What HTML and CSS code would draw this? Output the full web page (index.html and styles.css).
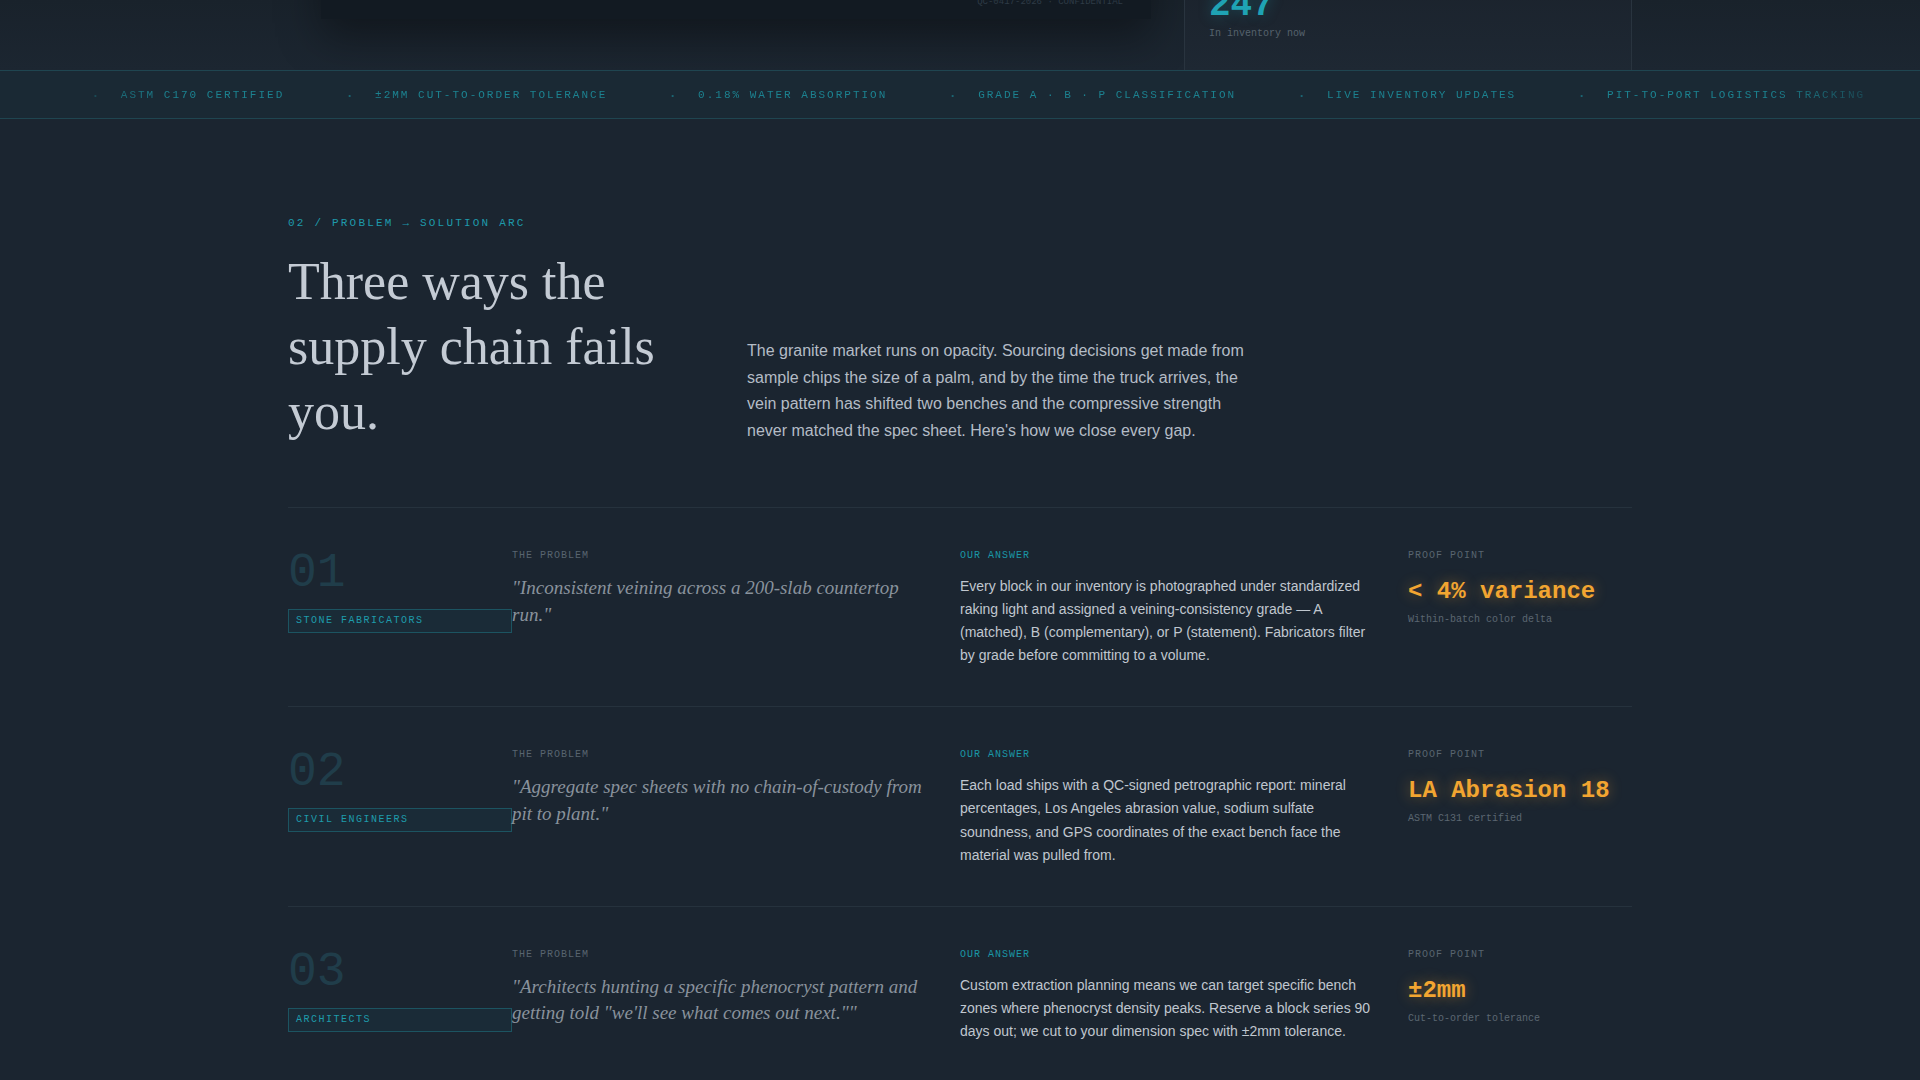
FILE: index.html
```html
<!DOCTYPE html>
<html>
<head>
    <title>Granite Supply — Problem / Solution</title>
    <link rel="stylesheet" href="styles.css">
</head>
<body>
    <header class="hero">
        <div class="hero-inner">
            <div class="hero-visual">
                <div class="slab-frame">
                    <span class="slab-caption">QC-0417-2026 · CONFIDENTIAL</span>
                </div>
            </div>
            <div class="stat-card">
                <div class="stat-num">247</div>
                <div class="stat-label">In inventory now</div>
            </div>
        </div>
    </header>

    <!-- ticker strip -->
    <div class="ticker">
        <div class="ticker-track">
            <span class="tick"><i>•</i>ASTM C170 CERTIFIED</span>
            <span class="tick"><i>•</i>±2MM CUT-TO-ORDER TOLERANCE</span>
            <span class="tick"><i>•</i>0.18% WATER ABSORPTION</span>
            <span class="tick"><i>•</i>GRADE A · B · P CLASSIFICATION</span>
            <span class="tick"><i>•</i>LIVE INVENTORY UPDATES</span>
            <span class="tick"><i>•</i>PIT-TO-PORT LOGISTICS TRACKING</span>
            <span class="tick"><i>•</i>ASTM C170 CERTIFIED</span>
        </div>
    </div>

    <section class="arc">
        <div class="arc-head">
            <div>
                <p class="eyebrow">02 / PROBLEM → SOLUTION ARC</p>
                <h2>Three ways the supply chain fails you.</h2>
            </div>
            <p class="intro">The granite market runs on opacity. Sourcing decisions get made from sample chips the size of a palm, and by the time the truck arrives, the vein pattern has shifted two benches and the compressive strength never matched the spec sheet. Here's how we close every gap.</p>
        </div>

        <div class="rows">
            <!-- 01 -->
            <article class="row">
                <div class="who">
                    <div class="idx">01</div>
                    <span class="tag">STONE FABRICATORS</span>
                </div>
                <div class="cell">
                    <div class="cap">THE PROBLEM</div>
                    <p class="quote">"Inconsistent veining across a 200-slab countertop run."</p>
                </div>
                <div class="cell">
                    <div class="cap cap-teal">OUR ANSWER</div>
                    <p class="answer">Every block in our inventory is photographed under standardized raking light and assigned a veining-consistency grade — A (matched), B (complementary), or P (statement). Fabricators filter by grade before committing to a volume.</p>
                </div>
                <div class="proof">
                    <div class="cap">PROOF POINT</div>
                    <div class="proof-val">&lt; 4% variance</div>
                    <div class="proof-sub">Within-batch color delta</div>
                </div>
            </article>

            <!-- 02 -->
            <article class="row">
                <div class="who">
                    <div class="idx">02</div>
                    <span class="tag">CIVIL ENGINEERS</span>
                </div>
                <div class="cell">
                    <div class="cap">THE PROBLEM</div>
                    <p class="quote">"Aggregate spec sheets with no chain-of-custody from pit to plant."</p>
                </div>
                <div class="cell">
                    <div class="cap cap-teal">OUR ANSWER</div>
                    <p class="answer">Each load ships with a QC-signed petrographic report: mineral percentages, Los Angeles abrasion value, sodium sulfate soundness, and GPS coordinates of the exact bench face the material was pulled from.</p>
                </div>
                <div class="proof">
                    <div class="cap">PROOF POINT</div>
                    <div class="proof-val">LA Abrasion 18</div>
                    <div class="proof-sub">ASTM C131 certified</div>
                </div>
            </article>

            <!-- 03 -->
            <article class="row">
                <div class="who">
                    <div class="idx">03</div>
                    <span class="tag">ARCHITECTS</span>
                </div>
                <div class="cell">
                    <div class="cap">THE PROBLEM</div>
                    <p class="quote">"Architects hunting a specific phenocryst pattern and getting told "we'll see what comes out next.""</p>
                </div>
                <div class="cell">
                    <div class="cap cap-teal">OUR ANSWER</div>
                    <p class="answer">Custom extraction planning means we can target specific bench zones where phenocryst density peaks. Reserve a block series 90 days out; we cut to your dimension spec with ±2mm tolerance.</p>
                </div>
                <div class="proof">
                    <div class="cap">PROOF POINT</div>
                    <div class="proof-val">±2mm</div>
                    <div class="proof-sub">Cut-to-order tolerance</div>
                </div>
            </article>
        </div>
    </section>
</body>
</html>
```

FILE: styles.css
```css
body {
    margin: 0;
    background: #1b2530;
    font-family: "Liberation Sans", Arial, sans-serif;
    color: #c1c8d0;
}

/* hero (scrolled mostly out of view) */
.hero {
    height: 70px;
    overflow: hidden;
    display: flex;
    align-items: flex-end;
    background: linear-gradient(180deg, #19222b, #1c2631);
}
.hero-inner {
    width: 1344px;
    margin: 0 auto;
    display: grid;
    grid-template-columns: 1fr 448px;
    gap: 33px;
    align-items: end;
}
.hero-visual {
    padding: 0 0 51px 33px;
}
.slab-frame {
    height: 420px;
    background: #121a22;
    box-shadow: 0 18px 40px rgba(0,0,0,0.35);
    display: flex;
    align-items: flex-end;
    justify-content: flex-end;
    padding: 0 28px 12px;
}
.slab-caption {
    font-family: "Liberation Mono", monospace;
    font-size: 9px;
    color: #2e3b46;
}
.stat-card {
    border: 1px solid #29343f;
    border-bottom: none;
    background: linear-gradient(180deg, #1b232d, #1e2833);
    padding: 0 24px 29px;
}
.stat-num {
    font-family: "Liberation Mono", monospace;
    font-size: 36px;
    font-weight: bold;
    line-height: 1;
    color: #1fa3b4;
    text-shadow: 0 0 14px rgba(31,163,180,0.35);
    margin-bottom: 2px;
}
.stat-label {
    font-family: "Liberation Mono", monospace;
    font-size: 10px;
    line-height: 15px;
    color: #56626d;
}

/* ticker */
.ticker {
    border-top: 1px solid #1f4550;
    border-bottom: 1px solid #1f4550;
    background: #1a2934;
    padding: 17px 0 15px;
    overflow: hidden;
}
.ticker-track {
    display: flex;
    gap: 63px;
    white-space: nowrap;
    padding-left: 93px;
    font-family: "Liberation Mono", monospace;
    font-size: 11px;
    line-height: 15px;
    letter-spacing: 2px;
    color: #1c8290;
    -webkit-mask-image: linear-gradient(90deg, transparent, #000 9%, #000 92%, transparent);
    mask-image: linear-gradient(90deg, transparent, #000 9%, #000 92%, transparent);
}
.tick {
    display: flex;
    align-items: center;
    gap: 23px;
}
.tick i {
    font-style: normal;
    font-size: 8px;
    letter-spacing: 0;
    opacity: 0.7;
}

/* problem / solution arc */
.arc {
    width: 1344px;
    margin: 0 auto;
    padding-top: 97px;
}
.arc-head {
    display: grid;
    grid-template-columns: 411px 1fr;
    gap: 48px;
    align-items: end;
    margin-bottom: 63px;
}
.eyebrow {
    margin: 0 0 18px;
    font-family: "Liberation Mono", monospace;
    font-size: 11px;
    line-height: 15px;
    letter-spacing: 2.2px;
    color: #1e9aab;
}
h2 {
    margin: 0;
    font-family: "Liberation Serif", "Times New Roman", serif;
    font-weight: normal;
    font-size: 52px;
    line-height: 65px;
    color: #c4cbd4;
}
.intro {
    margin: 0;
    max-width: 512px;
    font-size: 16px;
    line-height: 1.65;
    color: #b4bcc6;
}

.row {
    display: grid;
    grid-template-columns: 1fr 2fr 2fr 1fr;
    border-top: 1px solid #26323d;
    padding: 41px 0 39px;
}
.who {
    display: flex;
    flex-direction: column;
    align-items: stretch;
}
.idx {
    font-family: "Liberation Mono", monospace;
    font-size: 48px;
    line-height: 1;
    color: #203d4a;
    margin-bottom: 12px;
}
.tag {
    display: block;
    border: 1px solid #1c5461;
    background: rgba(28,120,140,0.08);
    padding: 4px 7px;
    font-family: "Liberation Mono", monospace;
    font-size: 10px;
    line-height: 14px;
    letter-spacing: 1.5px;
    color: #1e9cac;
}
.cell {
    padding-right: 32px;
}
.cap {
    font-family: "Liberation Mono", monospace;
    font-size: 10px;
    line-height: 14px;
    letter-spacing: 1px;
    color: #58646f;
    margin-bottom: 12px;
}
.cap-teal {
    color: #1a96a6;
}
.quote {
    margin: 2px 0 0;
    font-family: "Liberation Serif", "Times New Roman", serif;
    font-style: italic;
    font-size: 19px;
    line-height: 1.4;
    color: #89929c;
}
.answer {
    margin: 0;
    font-size: 14px;
    line-height: 1.65;
    color: #c0c7cf;
}
.proof .cap {
    margin-bottom: 15px;
}
.proof-val {
    font-family: "Liberation Mono", monospace;
    font-size: 24px;
    font-weight: bold;
    line-height: 1.2;
    color: #f2a531;
    text-shadow: 0 0 14px rgba(242,165,49,0.45);
}
.proof-sub {
    margin-top: 5px;
    font-family: "Liberation Mono", monospace;
    font-size: 10px;
    line-height: 15px;
    color: #5b6772;
}
```
